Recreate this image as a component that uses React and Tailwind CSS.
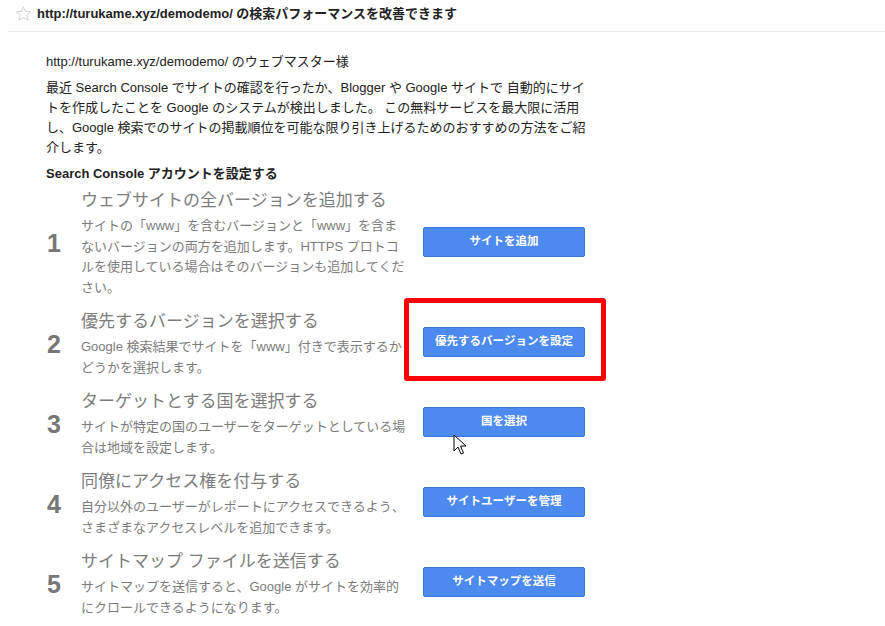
const steps = [
  {
    n: "1",
    title: "ウェブサイトの全バージョンを追加する",
    lines: [
      "サイトの「www」を含むバージョンと「www」を含ま",
      "ないバージョンの両方を追加します。HTTPS プロトコ",
      "ルを使用している場合はそのバージョンも追加してくだ",
      "さい。",
    ],
    button: "サイトを追加",
  },
  {
    n: "2",
    title: "優先するバージョンを選択する",
    lines: ["Google 検索結果でサイトを「www」付きで表示するか", "どうかを選択します。"],
    button: "優先するバージョンを設定",
  },
  {
    n: "3",
    title: "ターゲットとする国を選択する",
    lines: ["サイトが特定の国のユーザーをターゲットとしている場", "合は地域を設定します。"],
    button: "国を選択",
  },
  {
    n: "4",
    title: "同僚にアクセス権を付与する",
    lines: ["自分以外のユーザーがレポートにアクセスできるよう、", "さまざまなアクセスレベルを追加できます。"],
    button: "サイトユーザーを管理",
  },
  {
    n: "5",
    title: "サイトマップ ファイルを送信する",
    lines: ["サイトマップを送信すると、Google がサイトを効率的", "にクロールできるようになります。"],
    button: "サイトマップを送信",
  },
];

const Step = ({ step }) => (
  <div className="flex items-center">
    <div className="w-[35px] text-[25px] font-bold text-[#777] leading-none pl-[1px]">{step.n}</div>
    <div className="w-[342px]">
      <div className="text-[17px] leading-[24px] text-[#7c7c7c]">{step.title}</div>
      <div className="mt-[3px] text-[13px] leading-[20.5px] text-[#7c7c7c]">
        {step.lines.map((l) => (
          <div key={l} className="whitespace-nowrap">{l}</div>
        ))}
      </div>
    </div>
    <button className="mb-[4px] w-[162px] h-[30px] bg-[#4d8af0] border border-[#3a73d6] rounded-[2px] text-white text-[11.5px] font-bold">
      {step.button}
    </button>
  </div>
);

export default function App() {
  return (
    <div className="relative w-[885px] h-[626px] overflow-hidden bg-white font-['Liberation_Sans','Noto_Sans_CJK_JP',sans-serif]">
      {/* header */}
      <div className="ml-2 h-[32px] border-b border-[#ebebeb] flex items-center pb-[4px]">
        <svg width="17" height="17" viewBox="0 0 24 24" className="ml-[7px] mr-[5px]">
          <path
            d="M12 2.5l2.9 6.6 7.1.6-5.4 4.7 1.6 7-6.2-3.7-6.2 3.7 1.6-7L2 9.7l7.1-.6z"
            fill="none"
            stroke="#c8c8c8"
            strokeWidth="1.2"
            strokeLinejoin="round"
          />
        </svg>
        <span className="text-[13px] font-bold text-[#222]">
          http://turukame.xyz/demodemo/ の検索パフォーマンスを改善できます
        </span>
      </div>

      {/* body */}
      <div className="pl-[46px] pt-[20px] text-[13px] text-[#222]">
        <div className="leading-[20px]">http://turukame.xyz/demodemo/ のウェブマスター様</div>
        <div className="mt-[6px] leading-[20px] w-[540px]">
          <div className="whitespace-nowrap">最近 Search Console でサイトの確認を行ったか、Blogger や Google サイトで 自動的にサイ</div>
          <div className="whitespace-nowrap">トを作成したことを Google のシステムが検出しました。 この無料サービスを最大限に活用</div>
          <div className="whitespace-nowrap">し、Google 検索でのサイトの掲載順位を可能な限り引き上げるためのおすすめの方法をご紹</div>
          <div className="whitespace-nowrap">介します。</div>
        </div>
        <div className="mt-[6px] leading-[20px] font-bold">Search Console アカウントを設定する</div>

        <div className="mt-[5px] flex flex-col gap-[12px]">
          {steps.map((s) => (
            <Step key={s.n} step={s} />
          ))}
        </div>
      </div>

      {/* highlight box */}
      <div className="absolute left-[404px] top-[298px] w-[202px] h-[83px] border-[5px] border-[#ff0000] rounded-[3px]" />

      {/* mouse cursor */}
      <svg className="absolute left-[453px] top-[434px]" width="14" height="21" viewBox="0 0 14 21">
        <path d="M1 1v16l4-4 3 7 2.5-1-3-7h5.5z" fill="#fff" stroke="#000" strokeWidth="1" strokeLinejoin="round" />
      </svg>
    </div>
  );
}
